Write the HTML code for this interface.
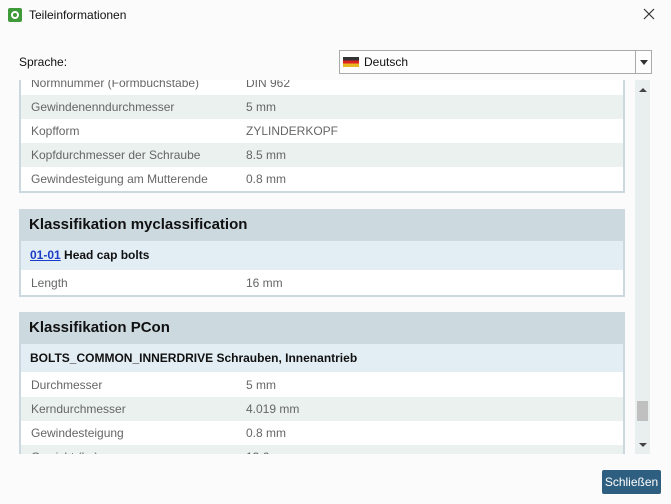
<!DOCTYPE html>
<html><head><meta charset="utf-8"><style>
*{margin:0;padding:0;box-sizing:border-box}
html,body{width:671px;height:504px;overflow:hidden}
body{background:#fbfbfb;font-family:"Liberation Sans",sans-serif;font-size:12px;color:#222;position:relative}
.a{position:absolute}
.row{position:absolute;left:21px;width:602px;height:24px;line-height:24px;color:#666;font-size:12px}
.row span{position:absolute;left:10px}
.row b{position:absolute;left:225px;font-weight:normal}
.s{background:#eaf1ef}
.hd{position:absolute;left:19px;width:606px;height:32px;background:#ccd9df;font-weight:bold;font-size:15px;line-height:32px;padding-left:10px;color:#111}
.sub{position:absolute;left:21px;width:602px;background:#e2eef4;font-weight:bold;font-size:12px;padding-left:9px;color:#111}
</style></head><body>
<div class="a" style="left:8px;top:8px;width:14px;height:14px;background:#3f9a3a;border-radius:2px"><div style="position:absolute;left:3px;top:3px;width:8px;height:8px;border:2px solid #fff;border-radius:50%"></div></div>
<div class="a" style="left:29px;top:8px;font-size:12px;color:#111">Teileinformationen</div>
<svg class="a" style="left:643px;top:8px" width="12" height="12"><path d="M1 1L11 11M11 1L1 11" stroke="#333" stroke-width="1.2"/></svg>
<div class="a" style="left:19px;top:55px;color:#111">Sprache:</div>
<div class="a" style="left:339px;top:50px;width:313px;height:24px;border:1px solid #aaa;background:#fdfdfd">
 <div class="a" style="left:3px;top:6px;width:16px;height:10px;background:linear-gradient(#333 33%,#d22 33%,#d22 66%,#e8b820 66%)"></div>
 <div class="a" style="left:24px;top:4px;color:#111">Deutsch</div>
 <div class="a" style="left:295px;top:0;width:1px;height:22px;background:#aaa"></div>
 <div class="a" style="left:300px;top:9px;border:4px solid transparent;border-top:5px solid #333;border-bottom:0"></div>
</div>
<div style="position:absolute;left:0;top:80px;width:671px;height:374px;overflow:hidden">
<div style="position:absolute;left:0;top:-80px;width:671px;height:454px;overflow:hidden">
<div class="a" style="left:19px;top:71px;width:606px;height:122px;border:2px solid #ccd8df;border-top:0;background:#fff"></div>
<div class="row" style="top:71px"><span>Normnummer (Formbuchstabe)</span><b>DIN 962</b></div>
<div class="row s" style="top:95px"><span>Gewindenenndurchmesser</span><b>5 mm</b></div>
<div class="row" style="top:119px"><span>Kopfform</span><b>ZYLINDERKOPF</b></div>
<div class="row s" style="top:143px"><span>Kopfdurchmesser der Schraube</span><b>8.5 mm</b></div>
<div class="row" style="top:167px"><span>Gewindesteigung am Mutterende</span><b>0.8 mm</b></div>

<div class="a" style="left:19px;top:209px;width:606px;height:88px;border:2px solid #ccd8df;background:#fff"></div>
<div class="hd" style="top:209px">Klassifikation myclassification</div>
<div class="sub" style="top:241px;height:29px;line-height:29px"><span style="color:#1a3cc8;text-decoration:underline">01-01</span> Head cap bolts</div>
<div class="row" style="top:271px"><span>Length</span><b>16 mm</b></div>

<div class="a" style="left:19px;top:312px;width:606px;height:142px;border:2px solid #ccd8df;border-bottom:0;background:#fff"></div>
<div class="hd" style="top:312px">Klassifikation PCon</div>
<div class="sub" style="top:344px;height:28px;line-height:28px">BOLTS_COMMON_INNERDRIVE Schrauben, Innenantrieb</div>
<div class="row" style="top:373px"><span>Durchmesser</span><b>5 mm</b></div>
<div class="row s" style="top:397px"><span>Kerndurchmesser</span><b>4.019 mm</b></div>
<div class="row" style="top:421px"><span>Gewindesteigung</span><b>0.8 mm</b></div>
<div class="row s" style="top:445px;height:9px;overflow:hidden"><span>Gewicht (kg)</span><b>13.6</b></div>
</div></div>
<div class="a" style="left:635px;top:80px;width:15px;height:374px;background:#e9efee"></div>
<div class="a" style="left:639px;top:88px;border:4px solid transparent;border-bottom:4px solid #444;border-top:0"></div>
<div class="a" style="left:639px;top:443px;border:4px solid transparent;border-top:4px solid #444;border-bottom:0"></div>
<div class="a" style="left:637px;top:401px;width:11px;height:20px;background:#c0c0c0"></div>
<div class="a" style="left:602px;top:470px;width:59px;height:24px;background:#2e5f80;border-radius:2px;color:#fff;font-size:12px;line-height:24px;text-align:center">Schließen</div>
</body></html>
